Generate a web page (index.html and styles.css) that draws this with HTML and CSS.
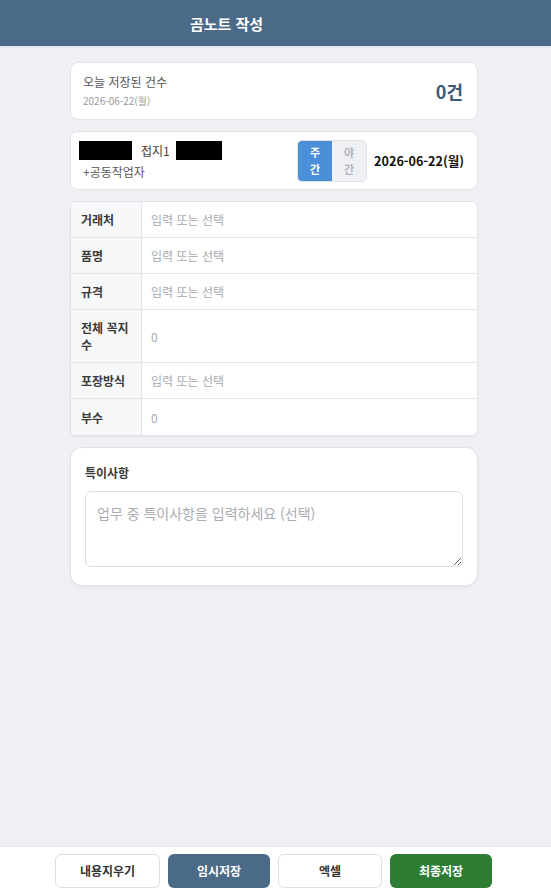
FILE: index.html
```html
<!DOCTYPE html>
<html lang="ko">
<head>
  <meta charset="UTF-8">
  <meta name="viewport" content="width=device-width, initial-scale=1.0">
  <title>곰노트 작성</title>
  <link rel="stylesheet" href="styles.css">
</head>
<body>
  <header class="topbar">
    <h1>곰노트 작성</h1>
  </header>

  <main class="page">
    <!-- 오늘 저장 건수 -->
    <section class="card summary">
      <div>
        <div class="summary-label">오늘 저장된 건수</div>
        <div class="summary-date">2026-06-22(월)</div>
      </div>
      <div class="summary-count">0건</div>
    </section>

    <!-- 작업자 / 주야간 / 날짜 -->
    <section class="card worker">
      <div class="worker-info">
        <div class="worker-line">
          <span class="mask mask-name"></span>
          <span class="worker-machine">접지1</span>
          <span class="mask mask-sub"></span>
        </div>
        <div class="coworker">+공동작업자</div>
      </div>
      <div class="shift">
        <button class="shift-btn active">주<br>간</button>
        <button class="shift-btn">야<br>간</button>
      </div>
      <div class="work-date">2026-06-22(월)</div>
    </section>

    <!-- 입력 표 -->
    <section class="card form-table">
      <div class="row">
        <div class="label">거래처</div>
        <div class="value">입력 또는 선택</div>
      </div>
      <div class="row">
        <div class="label">품명</div>
        <div class="value">입력 또는 선택</div>
      </div>
      <div class="row">
        <div class="label">규격</div>
        <div class="value">입력 또는 선택</div>
      </div>
      <div class="row">
        <div class="label">전체 꼭지수</div>
        <div class="value">0</div>
      </div>
      <div class="row">
        <div class="label">포장방식</div>
        <div class="value">입력 또는 선택</div>
      </div>
      <div class="row">
        <div class="label">부수</div>
        <div class="value">0</div>
      </div>
    </section>

    <!-- 특이사항 -->
    <section class="card notes">
      <div class="notes-title">특이사항</div>
      <textarea class="notes-input" placeholder="업무 중 특이사항을 입력하세요 (선택)"></textarea>
    </section>
  </main>

  <footer class="bottombar">
    <button class="btn btn-light btn-clear">내용지우기</button>
    <button class="btn btn-temp">임시저장</button>
    <button class="btn btn-light btn-excel">엑셀</button>
    <button class="btn btn-final">최종저장</button>
  </footer>
</body>
</html>
```

FILE: styles.css
```css
* {
  box-sizing: border-box;
}

html, body {
  height: 100%;
}

body {
  margin: 0;
  font-family: "Noto Sans CJK KR", "Noto Sans", sans-serif;
  background-color: #eef0f4;
  color: #333;
  display: flex;
  flex-direction: column;
}

.topbar {
  height: 46px;
  background-color: #4b6a88;
  display: flex;
  align-items: center;
  justify-content: center;
  padding-right: 98px;
  box-shadow: 0 1px 3px rgba(0, 0, 0, 0.08);
}

.topbar h1 {
  margin: 0;
  color: #fff;
  font-size: 15px;
  font-weight: 700;
}

.page {
  flex: 1;
  width: 408px;
  align-self: center;
  margin-right: 3px;
  padding-top: 16px;
  display: flex;
  flex-direction: column;
  gap: 11px;
}

.card {
  background-color: #fff;
  border: 1px solid #e1e3e8;
  border-radius: 8px;
}

.summary {
  height: 58px;
  padding: 0 14px 0 12px;
  display: flex;
  align-items: center;
  justify-content: space-between;
}

.summary-label {
  font-size: 12px;
  color: #555;
  line-height: 18px;
}

.summary-date {
  font-size: 10px;
  color: #9a9a9a;
  line-height: 16px;
  margin-top: 2px;
}

.summary-count {
  font-size: 18px;
  font-weight: 700;
  color: #3f5a76;
}

.worker {
  height: 59px;
  padding: 0 13px 0 8px;
  display: flex;
  align-items: center;
}

.worker-info {
  flex: 1;
  display: flex;
  flex-direction: column;
  gap: 3px;
}

.worker-line {
  display: flex;
  align-items: center;
  gap: 9px;
}

.mask {
  display: inline-block;
  height: 19px;
  background-color: #000;
}

.mask-name {
  width: 53px;
}

.mask-sub {
  width: 46px;
  margin-left: -3px;
}

.worker-machine {
  font-size: 12px;
  color: #444;
}

.coworker {
  font-size: 12px;
  color: #555;
  padding-left: 4px;
}

.shift {
  display: flex;
  border: 1px solid #dfe2e7;
  border-radius: 5px;
  overflow: hidden;
}

.shift-btn {
  width: 34px;
  height: 40px;
  border: none;
  padding: 0;
  font-family: inherit;
  font-size: 11px;
  font-weight: 700;
  line-height: 17px;
  background-color: #eef0f4;
  color: #b0b4ba;
}

.shift-btn.active {
  background-color: #4a8fd8;
  color: #fff;
}

.work-date {
  margin-left: 7px;
  font-size: 12.6px;
  font-weight: 700;
  color: #111;
}

.form-table {
  border-radius: 6px;
  overflow: hidden;
  box-shadow: 0 1px 2px rgba(0, 0, 0, 0.06);
}

.row {
  display: flex;
  min-height: 36px;
  border-bottom: 1px solid #e4e6ea;
}

.row:last-child {
  border-bottom: none;
}

.label {
  width: 71px;
  flex-shrink: 0;
  background-color: #f7f8fa;
  border-right: 1px solid #e4e6ea;
  padding: 9px 8px 9px 10px;
  font-size: 12px;
  font-weight: 700;
  color: #3a3a3a;
  line-height: 17px;
  display: flex;
  align-items: center;
}

.value {
  flex: 1;
  padding: 0 9px;
  font-size: 12px;
  color: #a6a9ae;
  display: flex;
  align-items: center;
}

.notes {
  border-radius: 12px;
  padding: 16px 14px 18px 14px;
  box-shadow: 0 1px 3px rgba(0, 0, 0, 0.06);
}

.notes-title {
  font-size: 12px;
  font-weight: 700;
  color: #3a3a3a;
  margin-bottom: 10px;
}

.notes-input {
  display: block;
  width: 100%;
  height: 76px;
  border: 1px solid #dcdfe3;
  border-radius: 6px;
  padding: 11px 11px;
  font-family: inherit;
  font-size: 14px;
  color: #333;
  resize: vertical;
}

.notes-input::placeholder {
  color: #a9acb1;
}

.bottombar {
  height: 48px;
  background-color: #fff;
  border-top: 1px solid #e2e4e8;
  display: flex;
  justify-content: center;
  align-items: center;
  gap: 8px;
  padding-right: 4px;
}

.btn {
  height: 34px;
  width: 102px;
  border-radius: 6px;
  font-family: inherit;
  font-size: 12px;
  font-weight: 700;
  cursor: pointer;
}

.btn-clear {
  width: 105px;
}

.btn-excel {
  width: 104px;
}

.btn-light {
  background-color: #fff;
  border: 1px solid #dcdfe3;
  color: #333;
}

.btn-temp {
  background-color: #4b6a88;
  border: none;
  color: #fff;
}

.btn-final {
  background-color: #2e7d34;
  border: none;
  color: #fff;
}
```
